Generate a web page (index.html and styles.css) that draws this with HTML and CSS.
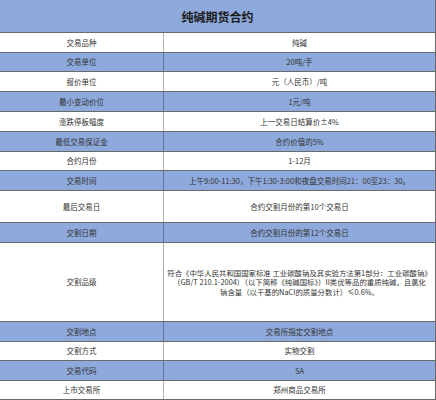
FILE: index.html
```html
<!DOCTYPE html>
<html lang="zh">
<head>
<meta charset="utf-8">
<link rel="stylesheet" href="styles.css">
</head>
<body>
<div class="sheet">
  <div class="title">纯碱期货合约</div>
  <div class="row h20"><div class="k">交易品种</div><div class="v">纯碱</div></div>
  <div class="row h19 blue"><div class="k">交易单位</div><div class="v">20吨/手</div></div>
  <div class="row h20"><div class="k">报价单位</div><div class="v">元（人民币）/吨</div></div>
  <div class="row h20 blue"><div class="k">最小变动价位</div><div class="v">1元/吨</div></div>
  <div class="row h20"><div class="k">涨跌停板幅度</div><div class="v">上一交易日结算价±4%</div></div>
  <div class="row h20 blue"><div class="k">最低交易保证金</div><div class="v">合约价值的5%</div></div>
  <div class="row h19"><div class="k">合约月份</div><div class="v">1-12月</div></div>
  <div class="row h20 blue"><div class="k">交易时间</div><div class="v">上午9:00-11:30，下午1:30-3:00和夜盘交易时间21：00至23：30。</div></div>
  <div class="row h32"><div class="k">最后交易日</div><div class="v">合约交割月份的第10个交易日</div></div>
  <div class="row h20 blue"><div class="k">交割日期</div><div class="v">合约交割月份的第12个交易日</div></div>
  <div class="row h79"><div class="k">交割品级</div><div class="v long">符合《中华人民共和国国家标准 工业碳酸钠及其实验方法第1部分：工业碳酸钠》<br>（GB/T 210.1-2004）（以下简称《纯碱国标》）II类优等品的重质纯碱，且氯化<br>钠含量（以干基的NaCl的质量分数计）≤0.6%。</div></div>
  <div class="row h20 blue"><div class="k">交割地点</div><div class="v">交易所指定交割地点</div></div>
  <div class="row h19"><div class="k">交割方式</div><div class="v">实物交割</div></div>
  <div class="row h20 blue"><div class="k">交易代码</div><div class="v">SA</div></div>
  <div class="row h19"><div class="k">上市交易所</div><div class="v">郑州商品交易所</div></div>
</div>
</body>
</html>
```
FILE: styles.css
```css
html, body {
  margin: 0;
  padding: 0;
  background: #ffffff;
}
.sheet {
  width: 436px;
  box-sizing: border-box;
  border-right: 1px solid #6a6a6a;
  font-family: "Noto Sans CJK SC", "DejaVu Sans", sans-serif;
  color: #333333;
  font-size: 7.5px;
}
.title {
  height: 33px;
  box-sizing: border-box;
  border-bottom: 1px solid #6a6a6a;
  background: #8ea9db;
  display: flex;
  align-items: center;
  justify-content: center;
  font-weight: bold;
  font-size: 12px;
  color: #1a1a1a;
  padding-top: 1px;
}
.row {
  display: grid;
  grid-template-columns: 164px 1fr;
  box-sizing: border-box;
  border-bottom: 1px solid #6a6a6a;
}
.row.blue {
  background: #8ea9db;
}
.h19 { height: 19px; }
.h20 { height: 20px; }
.h32 { height: 32px; }
.h79 { height: 79px; }
.k, .v {
  display: flex;
  align-items: center;
  justify-content: center;
  text-align: center;
  line-height: 1;
  min-width: 0;
}
.k {
  border-right: 1px solid rgba(0, 0, 0, 0.3);
}
.long {
  line-height: 9.5px;
  font-size: 7.4px;
  white-space: nowrap;
}
```
